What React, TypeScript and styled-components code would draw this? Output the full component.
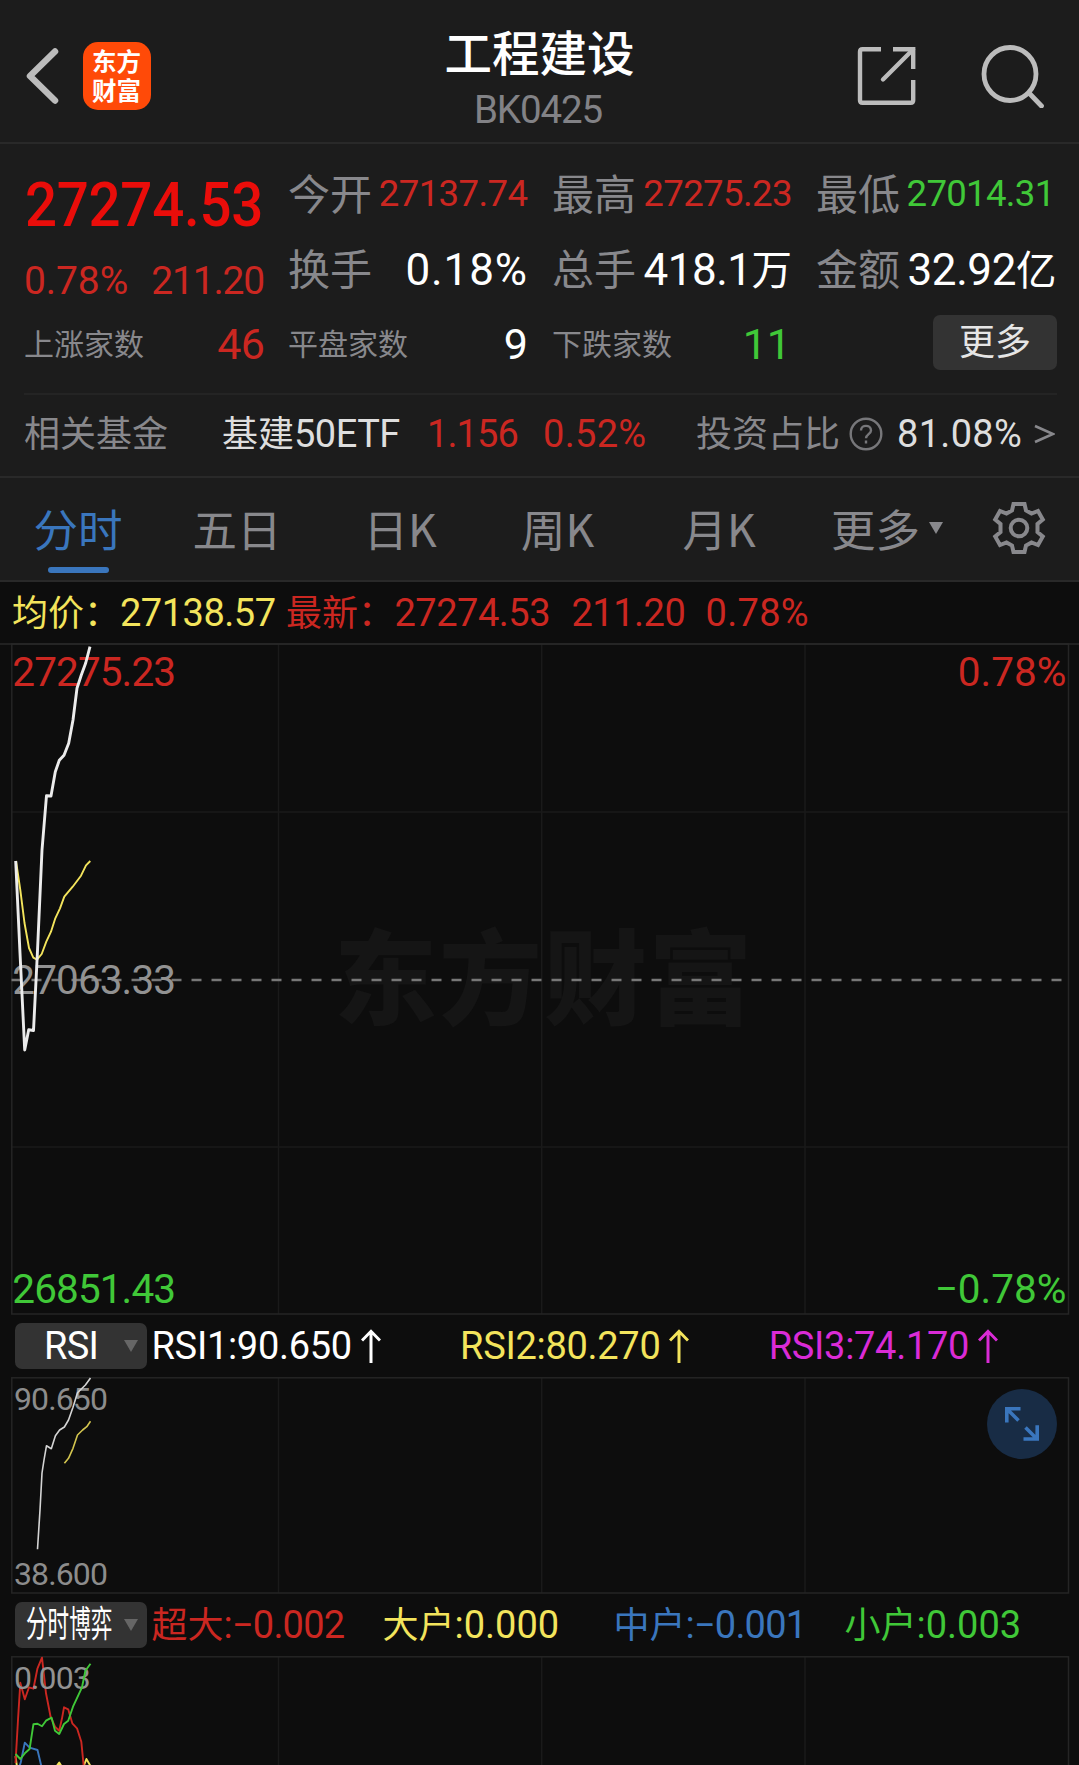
import React from 'react';
import styled, { createGlobalStyle } from 'styled-components';

const c = {
  panel: '#1c1c1c',
  chart: '#0d0d0d',
  line: '#292929',
  grid: '#1a1a1a',
  frame: '#252525',
  label: '#88888c',
  icon: '#bcbcbc',
  red: '#cb2721',
  green: '#40c838',
  yellow: '#f3e45c',
  magenta: '#da2bd6',
  blue: '#3a76bd',
  white: '#ffffff',
  chip: '#333333',
};

const latin = `Roboto, 'Noto Sans CJK SC', sans-serif`;
const han = `'Noto Sans CJK SC', sans-serif`;

const GlobalStyle = createGlobalStyle`
  * { box-sizing: border-box; }
  html, body { margin: 0; padding: 0; background: ${c.chart}; }
  body { font-family: ${latin}; overflow: hidden; }
  svg { display: block; flex: none; }
`;

const Page = styled.main`
  width: 1079px;
  height: 1765px;
  display: flex;
  flex-direction: column;
  overflow: hidden;
  background: ${c.chart};
`;

/* Header */
const Header = styled.header`
  flex: none;
  height: 144px;
  display: grid;
  grid-template-columns: 1fr auto 1fr;
  background: ${c.panel};
  border-bottom: 2px solid ${c.line};
`;

const HeaderSide = styled.div<{ $end?: boolean }>`
  display: flex;
  align-items: center;
  height: 152px;
  gap: ${p => (p.$end ? 64 : 23.5)}px;
  padding: ${p => (p.$end ? '0 34px 0 0' : '0 0 0 25px')};
  justify-content: ${p => (p.$end ? 'flex-end' : 'flex-start')};
`;

const Logo = styled.div`
  display: flex;
  flex-direction: column;
  align-items: center;
  width: 68px;
  height: 68px;
  border-radius: 15px;
  background: #ff4a08;
  color: #fff;
  padding-top: 3.5px;
`;

const LogoLine = styled.div`
  height: 29.5px;
  font: 700 24.5px/29.5px ${han};
`;

const Heading = styled.div`
  display: flex;
  flex-direction: column;
  align-items: center;
  padding-top: 21px;
`;

const Title = styled.h1`
  margin: 0;
  font: 500 47.5px/60px ${han};
  color: ${c.white};
`;

const Code = styled.span`
  font-size: 38.5px;
  line-height: 44px;
  margin: 7px 3px 0 0;
  letter-spacing: -1.1px;
  color: #828286;
`;

/* Quote */
const Quote = styled.section`
  flex: none;
  background: ${c.panel};
  padding: 12px 22px 0 24px;
`;

const QuoteGrid = styled.div`
  display: grid;
  grid-template-columns: 240px 240px 240px 241px;
  grid-template-rows: repeat(3, 75px);
  column-gap: 24px;
  height: 237px;
`;

const PriceBlock = styled.div`
  grid-row: 1 / 3;
  padding: 14px 0 0 0;
`;

const Price = styled.div`
  padding-left: 1px;
  font-size: 61.5px;
  font-weight: 500;
  line-height: 70px;
  letter-spacing: -0.3px;
  transform: scaleX(0.918);
  transform-origin: 0 50%;
  color: #ea0d0a;
`;

const Change = styled.div`
  display: flex;
  justify-content: space-between;
  margin-top: 16px;
  font-size: 39px;
  line-height: 50px;
  color: ${c.red};
`;

const ChangeText = styled.span<{ $ls: number }>`
  letter-spacing: ${p => p.$ls}px;
`;

const Stat = styled.div`
  display: flex;
  align-items: center;
  justify-content: space-between;
  white-space: nowrap;
`;

const StatLabel = styled.span<{ $small?: boolean }>`
  padding-bottom: 4px;
  font-family: ${han};
  font-size: ${p => (p.$small ? 30 : 42)}px;
  line-height: 60px;
  color: ${c.label};
`;

const StatValue = styled.span<{ $size: number; $color: string; $ls?: number; $end?: number }>`
  padding-top: ${p => (p.$size === 44 ? 2 : 0)}px;
  margin-right: ${p => p.$end ?? 0}px;
  font-size: ${p => p.$size}px;
  line-height: 60px;
  letter-spacing: ${p => p.$ls ?? 0}px;
  color: ${p => p.$color};
`;

const Han = styled.span<{ $size: number }>`
  font-family: ${han};
  font-size: ${p => p.$size}px;
  letter-spacing: 0;
  line-height: 1;
`;

const MoreButton = styled.button`
  justify-self: end;
  align-self: center;
  width: 124px;
  height: 55px;
  margin: 0 0 2px;
  padding: 0 0 6px;
  border: 0;
  border-radius: 7px;
  background: ${c.chip};
  color: #e6e6e6;
  font: 400 36px/49px ${han};
`;

const FundRow = styled.div`
  display: grid;
  grid-template-columns: 198px 205px 116px 153px 153px 48px 1fr;
  align-items: center;
  height: 83px;
  padding-bottom: 3px;
  border-top: 2px solid #242424;
  white-space: nowrap;
`;

const FundText = styled.span<{ $color: string; $ls?: number }>`
  font-size: 38px;
  line-height: 50px;
  letter-spacing: ${p => p.$ls ?? -0.5}px;
  color: ${p => p.$color};
`;

const FundTail = styled.div`
  display: flex;
  align-items: center;
  justify-content: space-between;
  padding-right: 2px;
`;

/* Period tabs */
const Tabs = styled.nav`
  flex: none;
  height: 106px;
  display: grid;
  grid-template-columns: 156px 162px 164px 151px 172px 164px 100px;
  background: ${c.panel};
  border-top: 2px solid ${c.line};
  border-bottom: 2px solid ${c.line};
`;

const Tab = styled.div<{ $active?: boolean }>`
  display: flex;
  align-items: center;
  justify-content: center;
  gap: 9px;
  position: relative;
  padding-bottom: 3px;
  font: 400 44.5px/60px ${han};
  color: ${p => (p.$active ? c.blue : c.label)};
  &::after {
    content: '';
    display: ${p => (p.$active ? 'block' : 'none')};
    position: absolute;
    left: 48px;
    bottom: 7px;
    width: 61px;
    height: 6px;
    border-radius: 3px;
    background: ${c.blue};
  }
`;

const Caret = styled.i<{ $color: string }>`
  width: 0;
  height: 0;
  border: 7.5px solid transparent;
  border-top: 12px solid ${p => p.$color};
  border-bottom: 0;
`;

/* Chart area */
const Summary = styled.div`
  flex: none;
  display: flex;
  align-items: center;
  height: 61px;
  padding-left: 12px;
  white-space: nowrap;
`;

const SummaryText = styled.span<{ $color: string; $w: number; $ls?: number }>`
  flex: none;
  width: ${p => p.$w}px;
  font-size: 38px;
  line-height: 50px;
  letter-spacing: ${p => p.$ls ?? -0.5}px;
  color: ${p => p.$color};
`;

const Plot = styled.div<{ $h: number }>`
  flex: none;
  position: relative;
  height: ${p => p.$h}px;
  overflow: hidden;
`;

const Axis = styled.span<{ $color: string; $top: number; $end?: boolean; $small?: boolean }>`
  position: absolute;
  top: ${p => p.$top}px;
  ${p => (p.$end ? 'right: 12.5px;' : `left: ${p.$small ? 14 : 12.3}px;`)}
  font-size: ${p => (p.$small ? 32 : 40.5)}px;
  line-height: 40px;
  letter-spacing: ${p => (p.$end ? 0 : -0.9)}px;
  color: ${p => p.$color};
`;

const Watermark = styled.span`
  position: absolute;
  left: 334px;
  top: 270px;
  font: 900 103px/120px ${han};
  letter-spacing: 2px;
  color: #151515;
`;

const Lines = styled.svg`
  position: absolute;
  inset: 0;
`;

const Indicator = styled.div<{ $step: number }>`
  flex: none;
  display: grid;
  grid-template-columns: 136.5px repeat(${p => (p.$step > 300 ? 3 : 4)}, ${p => p.$step}px);
  align-items: center;
  height: 62px;
  padding-left: 15px;
  white-space: nowrap;
`;

const Picker = styled.div`
  display: flex;
  align-items: center;
  justify-content: space-between;
  width: 132px;
  height: 46px;
  padding: 0 9px 0 11px;
  border-radius: 7px;
  background: ${c.chip};
  color: #fff;
`;

const PickerText = styled.span<{ $narrow?: boolean }>`
  width: 87px;
  text-align: center;
  font-size: ${p => (p.$narrow ? 36 : 38)}px;
  line-height: 46px;
  letter-spacing: ${p => (p.$narrow ? 0 : -0.8)}px;
  transform: ${p => (p.$narrow ? 'scaleX(0.6)' : 'none')};
  transform-origin: 0 50%;
  padding-left: ${p => (p.$narrow ? 0 : 3)}px;
`;

const Reading = styled.span<{ $color: string; $ls?: number }>`
  display: flex;
  align-items: center;
  gap: 9px;
  font-size: 38px;
  line-height: 46px;
  letter-spacing: ${p => p.$ls ?? 0}px;
  color: ${p => p.$color};
`;

const Expand = styled.button`
  position: absolute;
  left: 987px;
  top: 12px;
  width: 70px;
  height: 70px;
  padding: 0;
  border: 0;
  border-radius: 50%;
  background: #182c45;
`;

const UpArrow = () => (
  <svg width="20" height="34" viewBox="0 0 20 34" fill="none" stroke="currentColor" strokeWidth="3">
    <path d="M10 34V2M1 11.5 10 2.3l9 9.2" />
  </svg>
);

const GridLines = ({ top, bottom, rows = [] }: { top: number; bottom: number; rows?: number[] }) => (
  <g fill="none" strokeWidth="1.5">
    <g stroke={c.grid}>
      {[278.5, 541.7, 805].map(x => (
        <line key={x} x1={x} x2={x} y1={top} y2={bottom} />
      ))}
      {rows.map(y => (
        <line key={y} x1={12} x2={1068} y1={y} y2={y} />
      ))}
    </g>
    <rect x={11.8} y={top} width={1056.7} height={bottom - top} stroke={c.frame} />
  </g>
);

const stats = [
  { label: '今开', value: '27137.74', size: 36.6, color: c.red, ls: -0.6, end: 0.5 },
  { label: '最高', value: '27275.23', size: 36.6, color: c.red, ls: -0.6, end: 0 },
  { label: '最低', value: '27014.31', size: 36.6, color: c.green, ls: -0.7, end: 2.5 },
  { label: '换手', value: '0.18%', size: 44, color: c.white, ls: 0.9, end: 0 },
  { label: '总手', value: '418.1', unit: '万', size: 44, color: c.white, ls: -0.5, end: 0 },
  { label: '金额', value: '32.92', unit: '亿', size: 44, color: c.white, ls: -0.4, end: 0.5 },
];

export default function App() {
  return (
    <Page>
      <GlobalStyle />
      <Header>
        <HeaderSide>
          <svg width="34" height="58" viewBox="0 0 34 58" fill="none" stroke={c.icon} strokeWidth="6.5" strokeLinecap="round" strokeLinejoin="round">
            <path d="M30 4.5 5 29l25 24.5" />
          </svg>
          <Logo>
            <LogoLine>东方</LogoLine>
            <LogoLine>财富</LogoLine>
          </Logo>
        </HeaderSide>
        <Heading>
          <Title>工程建设</Title>
          <Code>BK0425</Code>
        </Heading>
        <HeaderSide $end>
          <svg width="60" height="60" viewBox="857 46 60 60" fill="none" stroke={c.icon} strokeWidth="4.4">
            <path d="M881 49.3h-18.500q-2.500 0-2.500 2.500v48.500q0 2.500 2.500 2.500h48.200q2.500 0 2.500-2.500V80M893 49.300h20.200V69" />
            <path d="M883 79.500 913 49.500" strokeLinecap="round" />
          </svg>
          <svg width="64" height="64" viewBox="981 43 64 64" fill="none" stroke={c.icon} strokeWidth="4.8" strokeLinecap="round">
            <ellipse cx="1010" cy="73" rx="26" ry="26.500" />
            <path d="M1029.500 92.500 1041.500 105" />
          </svg>
        </HeaderSide>
      </Header>

      <Quote>
        <QuoteGrid>
          <PriceBlock>
            <Price>27274.53</Price>
            <Change>
              <ChangeText $ls={-0.1}>0.78%</ChangeText>
              <ChangeText $ls={-1.2}>211.20</ChangeText>
            </Change>
          </PriceBlock>
          {stats.map(s => (
            <Stat key={s.label}>
              <StatLabel>{s.label}</StatLabel>
              <StatValue $size={s.size} $color={s.color} $ls={s.ls} $end={s.end}>
                {s.value}
                {s.unit && <Han $size={40.5}>{s.unit}</Han>}
              </StatValue>
            </Stat>
          ))}
          <Stat>
            <StatLabel $small>上涨家数</StatLabel>
            <StatValue $size={43} $color={c.red} $ls={-0.8}>46</StatValue>
          </Stat>
          <Stat>
            <StatLabel $small>平盘家数</StatLabel>
            <StatValue $size={43} $color={c.white}>9</StatValue>
          </Stat>
          <Stat>
            <StatLabel $small>下跌家数</StatLabel>
            <StatValue $size={43} $color={c.green} $end={1}>11</StatValue>
          </Stat>
          <MoreButton>更多</MoreButton>
        </QuoteGrid>
        <FundRow>
          <FundText $color={c.label}><Han $size={36}>相关基金</Han></FundText>
          <FundText $color="#dedede"><Han $size={36}>基建</Han>50ETF</FundText>
          <FundText $color={c.red} $ls={-0.9}>1.156</FundText>
          <FundText $color={c.red} $ls={0.3}>0.52%</FundText>
          <FundText $color={c.label}><Han $size={36}>投资占比</Han></FundText>
          <svg width="34" height="34" viewBox="0 0 34 34" fill="none" stroke="#77777a" strokeWidth="2.4">
            <circle cx="17" cy="17" r="15.300" />
            <path d="M12 13.500c0-6.200 10-6.200 10 0 0 3.600-5 3.800-5 7.800" />
            <path d="M17 23.500v3" />
          </svg>
          <FundTail>
            <FundText $color="#dedede" $ls={0.3}>81.08%</FundText>
            <svg width="21" height="20" viewBox="0 0 21 20" fill="none" stroke={c.label} strokeWidth="2.600">
              <path d="M1 2 19 10 1 18" />
            </svg>
          </FundTail>
        </FundRow>
      </Quote>

      <Tabs>
        <Tab $active>分时</Tab>
        <Tab>五日</Tab>
        <Tab>日K</Tab>
        <Tab>周K</Tab>
        <Tab>月K</Tab>
        <Tab>更多<Caret $color={c.label} /></Tab>
        <Tab>
          <svg width="54" height="54" viewBox="-27 -27 54 54" fill="none" stroke={c.label} strokeWidth="4">
            <path d="M-5.500-24H5.500L7-17.500 12.500-14.500 19-17 23.800-8.500 18.500-4V4L23.800 8.500 19 17 12.500 14.500 7 17.500 5.500 24H-5.500L-7 17.500-12.500 14.500-19 17-23.800 8.500-18.500 4V-4L-23.800-8.500-19-17-12.500-14.500-7-17.500Z" />
            <circle r="8.300" />
          </svg>
        </Tab>
      </Tabs>

      <Summary>
        <SummaryText $color={c.yellow} $w={108}><Han $size={36}>均价：</Han></SummaryText>
        <SummaryText $color={c.yellow} $w={166}>27138.57</SummaryText>
        <SummaryText $color={c.red} $w={108.5}><Han $size={36}>最新：</Han></SummaryText>
        <SummaryText $color={c.red} $w={177}>27274.53</SummaryText>
        <SummaryText $color={c.red} $w={134}>211.20</SummaryText>
        <SummaryText $color={c.red} $w={110} $ls={0.3}>0.78%</SummaryText>
      </Summary>

      <Plot $h={672}>
        <Watermark>东方财富</Watermark>
        <Lines width="1079" height="672" viewBox="0 643 1079 672">
          <GridLines top={644} bottom={1314} rows={[812, 1147]} />
          <path d="M0 644H1079" stroke={c.line} strokeWidth="1.5" />
          <path d="M11.500 980H1068" stroke="#777" strokeWidth="2.400" strokeDasharray="10 10" />
        </Lines>
        <Axis $color={c.red} $top={9}>27275.23</Axis>
        <Axis $color={c.red} $top={9} $end>0.78%</Axis>
        <Axis $color="#929292" $top={317}>27063.33</Axis>
        <Axis $color={c.green} $top={626}>26851.43</Axis>
        <Axis $color={c.green} $top={626} $end>−0.78%</Axis>
        <Lines width="1079" height="672" viewBox="0 643 1079 672" fill="none" strokeLinejoin="round">
          <path stroke={c.yellow} strokeWidth="1.900" d="M16 861 20.300 890 24.500 923 29 948 33.300 957.700 37 959.700 41.700 954 46.300 941.700 51 931.700 55.300 918.300 60 908.300 64.300 896.700 72.700 886.700 81 875.700 86 865.300 90.300 861" />
          <path stroke="#ececec" strokeWidth="2.900" d="M15.700 861 20 953 24.700 1050 28.700 1029.700 33.500 1030.500 37.300 955 42 850 46.500 795.700 51 796 55.300 771.700 59.300 760.300 64 755.300 68.700 743.300 73 720 77 688.300 81.300 675 85.700 663 90 646.700" />
        </Lines>
      </Plot>

      <Indicator $step={308.6}>
        <Picker><PickerText>RSI</PickerText><Caret $color="#666" /></Picker>
        <Reading $color={c.white} $ls={-0.3}>RSI1:90.650<UpArrow /></Reading>
        <Reading $color={c.yellow} $ls={-0.3}>RSI2:80.270<UpArrow /></Reading>
        <Reading $color={c.magenta} $ls={-0.3}>RSI3:74.170<UpArrow /></Reading>
      </Indicator>

      <Plot $h={217}>
        <Lines width="1079" height="217" viewBox="0 1377 1079 217">
          <GridLines top={1377.800} bottom={1593} />
        </Lines>
        <Axis $color="#8c8c8c" $top={2} $small>90.650</Axis>
        <Axis $color="#8c8c8c" $top={177} $small>38.600</Axis>
        <Lines width="1079" height="217" viewBox="0 1377 1079 217" fill="none" strokeWidth="1.600" strokeLinejoin="round">
          <path stroke="#d4d4d4" d="M37.500 1549.300 40 1510 42 1473 44 1460 46.500 1445.700 51.300 1448.700 55.400 1435.700 59.600 1430 64.400 1427 68.500 1420 73 1407.300 77.500 1392.700 85.400 1385 90.500 1378" />
          <path stroke="#d3c54f" d="M64.400 1463.300 68.500 1458.300 73 1448.300 77.500 1435 82.600 1430 86.800 1426.700 90.500 1421.300" />
        </Lines>
        <Expand aria-label="expand">
          <svg width="70" height="70" viewBox="987 1389 70 70" fill="none" stroke={c.blue} strokeWidth="3.600">
            <path d="M1020.500 1408.800H1006.800V1422.500M1007 1409 1018.500 1420.500M1023.500 1439H1037.200V1425.300M1037 1439 1025.500 1427.500" />
          </svg>
        </Expand>
      </Plot>

      <Indicator $step={231}>
        <Picker><PickerText $narrow>分时博弈</PickerText><Caret $color="#666" /></Picker>
        <Reading $color={c.red} $ls={-0.8}><span><Han $size={36}>超大</Han>:−0.002</span></Reading>
        <Reading $color={c.yellow}><span><Han $size={36}>大户</Han>:0.000</span></Reading>
        <Reading $color={c.blue} $ls={-0.8}><span><Han $size={36}>中户</Han>:−0.001</span></Reading>
        <Reading $color={c.green}><span><Han $size={36}>小户</Han>:0.003</span></Reading>
      </Indicator>

      <Plot $h={109}>
        <Lines width="1079" height="109" viewBox="0 1656 1079 109">
          <GridLines top={1656.800} bottom={1800} />
        </Lines>
        <Lines width="1079" height="109" viewBox="0 1656 1079 109" fill="none" strokeWidth="1.900" strokeLinejoin="round">
          <path stroke={c.blue} d="M18 1770 20.700 1762.700 24.800 1742.700 29.600 1747.700 37.500 1750 41.300 1766" />
          <path stroke={c.yellow} d="M15.500 1756 17 1767M56 1767 59.200 1762.500 62 1767M83.700 1766 86.400 1759 90.500 1766" />
          <path stroke={c.red} d="M15.500 1763 18 1720 20.300 1682.700 24.800 1699.300 29 1687.300 33.400 1688.700 37.500 1668.300 42 1657.700 46 1693.300 50.600 1716.700 55 1726.700 59.200 1730.700 62 1718.300 64 1707.300 68.200 1709.300 72.300 1723.300 77 1728.300 81.300 1741.700 83.700 1766" />
        </Lines>
        <Axis $color="#929292" $top={2} $small>0.003</Axis>
        <Lines width="1079" height="109" viewBox="0 1656 1079 109" fill="none" strokeWidth="1.900" strokeLinejoin="round">
          <path stroke={c.green} d="M15.500 1754 20.300 1759 24.800 1753.300 29.600 1749 33.400 1724.300 37.500 1723.700 42 1726.300 46 1720.700 51.600 1717.700 55 1730.700 59.200 1734 64 1724 68.200 1720.700 73 1706.700 82 1687.300 85.400 1670.700 90.500 1663.700" />
        </Lines>
      </Plot>
    </Page>
  );
}
